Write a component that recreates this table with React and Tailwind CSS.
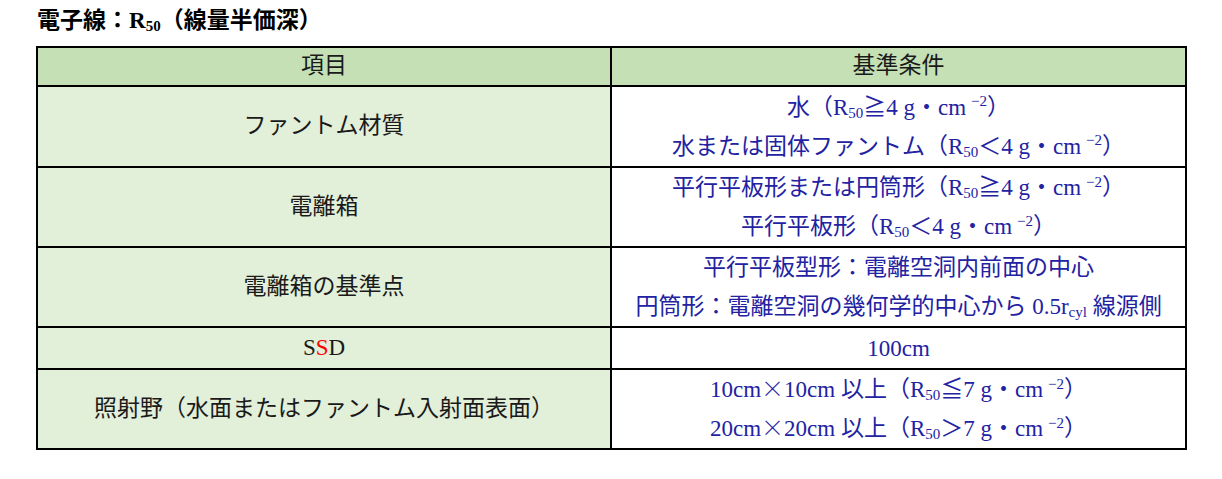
const R50 = () => (
  <>
    R<sub className="text-[15px] bottom-[-0.2em]">50</sub>
  </>
);

const Cm2 = () => (
  <>
    cm<sup className="text-[15px] top-[-0.55em] ml-[5px]">−2</sup>
  </>
);

const Times = () => (
  <span className="font-['Noto_Sans_CJK_JP',sans-serif] font-light leading-[0]">×</span>
);

const rows = [
  {
    h: "h-[81px]",
    label: "ファントム材質",
    lines: [
      <>水（<R50 />≧4 g・<Cm2 />）</>,
      <>水または固体ファントム（<R50 />＜4 g・<Cm2 />）</>,
    ],
  },
  {
    h: "h-[80px]",
    label: "電離箱",
    lines: [
      <>平行平板形または円筒形（<R50 />≧4 g・<Cm2 />）</>,
      <>平行平板形（<R50 />＜4 g・<Cm2 />）</>,
    ],
  },
  {
    h: "h-[80px]",
    label: "電離箱の基準点",
    lines: [
      <>平行平板型形：電離空洞内前面の中心</>,
      <>
        円筒形：電離空洞の幾何学的中心から 0.5r
        <sub className="text-[15px] bottom-[-0.2em]">cyl</sub> 線源側
      </>,
    ],
  },
  {
    h: "h-[42px]",
    label: (
      <>
        S<span className="text-[#ff0000]">S</span>D
      </>
    ),
    lines: [<>100cm</>],
  },
  {
    h: "h-[78px]",
    label: "照射野（水面またはファントム入射面表面）",
    lines: [
      <>10cm<Times />10cm 以上（<R50 />≦7 g・<Cm2 />）</>,
      <>20cm<Times />20cm 以上（<R50 />＞7 g・<Cm2 />）</>,
    ],
  },
];

export default function App() {
  return (
    <div className="min-h-screen bg-white font-['Liberation_Serif','Noto_Sans_CJK_JP',serif] text-[23px]">
      <div className="h-[46px] pl-[37px] pt-[5px] font-bold text-[23px] leading-[32px] text-black">
        電子線：<R50 />（線量半価深）
      </div>

      <div className="ml-[36px] w-[1151px] border-2 border-black">
        <div className="grid grid-cols-[574px_1fr] h-[39px] border-b-2 border-black bg-[#c5e0b4] text-[#1a1a1a]">
          <div className="flex items-center justify-center border-r-2 border-black">項目</div>
          <div className="flex items-center justify-center">基準条件</div>
        </div>

        {rows.map((row, i) => (
          <div
            key={i}
            className={`grid grid-cols-[574px_1fr] overflow-hidden ${row.h} ${
              i < rows.length - 1 ? "border-b-2 border-black" : ""
            }`}
          >
            <div className="flex items-center justify-center border-r-2 border-black bg-[#e2efd9] text-[#1a1a1a]">
              {row.label}
            </div>
            <div className="flex flex-col items-center justify-center leading-[39px] text-[#2222a2]">
              {row.lines.map((line, j) => (
                <div key={j} className="h-[39px]">{line}</div>
              ))}
            </div>
          </div>
        ))}
      </div>
    </div>
  );
}
